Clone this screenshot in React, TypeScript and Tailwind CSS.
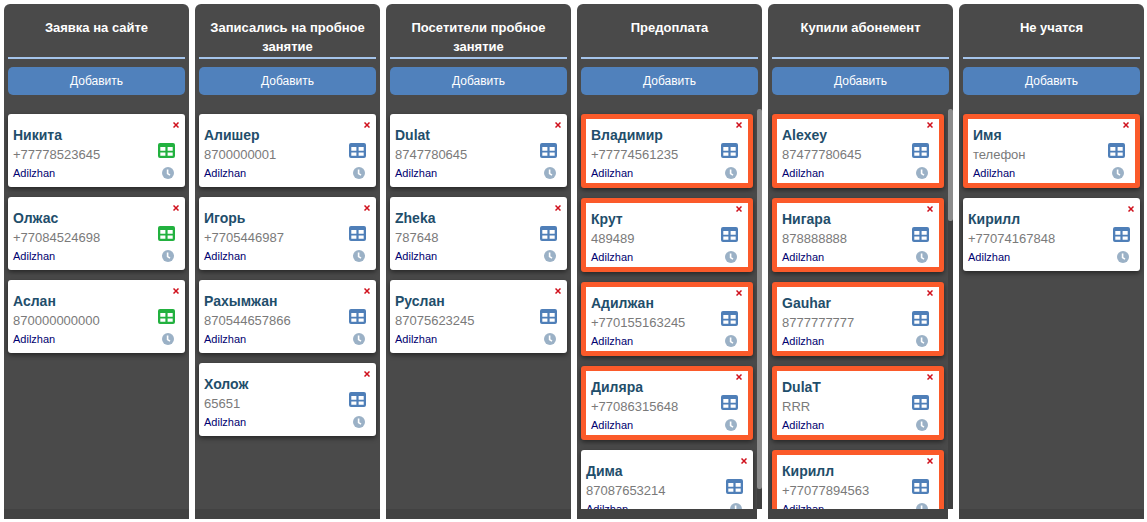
type Lead = { name: string; phone: string; hot?: boolean; green?: boolean };
type Stage = { title: string; leads: Lead[]; thumb?: string };

const stages: Stage[] = [
  {
    title: "Заявка на сайте",
    leads: [
      { name: "Никита", phone: "+77778523645", green: true },
      { name: "Олжас", phone: "+77084524698", green: true },
      { name: "Аслан", phone: "870000000000", green: true },
    ],
  },
  {
    title: "Записались на пробное занятие",
    leads: [
      { name: "Алишер", phone: "8700000001" },
      { name: "Игорь", phone: "+7705446987" },
      { name: "Рахымжан", phone: "870544657866" },
      { name: "Холож", phone: "65651" },
    ],
  },
  {
    title: "Посетители пробное занятие",
    leads: [
      { name: "Dulat", phone: "8747780645" },
      { name: "Zheka", phone: "787648" },
      { name: "Руслан", phone: "87075623245" },
    ],
  },
  {
    title: "Предоплата",
    thumb: "h-[95%]",
    leads: [
      { name: "Владимир", phone: "+77774561235", hot: true },
      { name: "Крут", phone: "489489", hot: true },
      { name: "Адилжан", phone: "+770155163245", hot: true },
      { name: "Диляра", phone: "+77086315648", hot: true },
      { name: "Дима", phone: "87087653214" },
    ],
  },
  {
    title: "Купили абонемент",
    thumb: "h-[28%]",
    leads: [
      { name: "Alexey", phone: "87477780645", hot: true },
      { name: "Нигара", phone: "878888888", hot: true },
      { name: "Gauhar", phone: "8777777777", hot: true },
      { name: "DulaT", phone: "RRR", hot: true },
      { name: "Кирилл", phone: "+77077894563", hot: true },
    ],
  },
  {
    title: "Не учатся",
    leads: [
      { name: "Имя", phone: "телефон", hot: true },
      { name: "Кирилл", phone: "+77074167848" },
    ],
  },
];

function TableIcon({ green }: { green?: boolean }) {
  return (
    <svg width="17" height="15" viewBox="0 0 17 15" className={green ? "text-[#22b13f]" : "text-[#4f7fb8]"} aria-hidden="true">
      <path
        fill="currentColor"
        fillRule="evenodd"
        d="M2 0H15Q17 0 17 2V13Q17 15 15 15H2Q0 15 0 13V2Q0 0 2 0ZM2.3 4V7.8H7.4V4ZM9.6 4V7.8H14.7V4ZM2.3 9.4V12.8H7.4V9.4ZM9.6 9.4V12.8H14.7V9.4Z"
      />
    </svg>
  );
}

function ClockIcon() {
  return (
    <svg width="12" height="12" viewBox="0 0 12 12" aria-hidden="true">
      <circle cx="6" cy="6" r="6" fill="#9bb1c6" />
      <path d="M5.6 2.4V6.6L8 8.2" fill="none" stroke="#fff" strokeWidth="1.6" />
    </svg>
  );
}

function CloseIcon() {
  return (
    <svg width="6" height="6" viewBox="0 0 6 6" aria-hidden="true">
      <path d="M0.5 0.5L5.5 5.5M5.5 0.5L0.5 5.5" stroke="#d0101c" strokeWidth="1.5" />
    </svg>
  );
}

function LeadCard({ lead }: { lead: Lead }) {
  return (
    <li
      className={
        lead.hot
          ? "flex h-[74px] shrink-0 justify-between rounded-[3px] border-5 border-[#fb5a2a] bg-white pl-[5px] shadow-[0_2px_5px_rgba(0,0,0,0.5)]"
          : "flex h-[73px] shrink-0 justify-between rounded-[3px] bg-white pt-[5px] pl-[5px] shadow-[0_2px_5px_rgba(0,0,0,0.5)]"
      }
    >
      <div className="min-w-0 pt-[6px]">
        <h3 className="text-[14px] leading-5 font-bold text-[#1f4e6b]">{lead.name}</h3>
        <p className="text-[13px] leading-5 text-[#7a7a7a]">{lead.phone}</p>
        <a href="#adilzhan" className="block text-[11px] leading-4 text-[#000070]">
          Adilzhan
        </a>
      </div>
      <div className="flex flex-col items-end pt-[3px]">
        <button type="button" aria-label="Удалить" className="mr-[6px]">
          <CloseIcon />
        </button>
        <button type="button" aria-label="Расписание" className="mt-[15px] mr-[10px]">
          <TableIcon green={lead.green} />
        </button>
        <button type="button" aria-label="История" className="mt-[9px] mr-[11px]">
          <ClockIcon />
        </button>
      </div>
    </li>
  );
}

function StageColumn({ stage }: { stage: Stage }) {
  return (
    <section className="flex min-w-0 flex-1 flex-col">
      <div className="flex min-h-0 flex-1 flex-col rounded-t-[6px] bg-[#4a4a4a]">
        <header className="shrink-0 px-1 pb-[14px]">
          <h2 className="h-[55px] border-b-2 border-[#a5c4ea] px-2 pt-[14px] text-center text-[13px] leading-[19px] font-bold text-white">
            {stage.title}
          </h2>
          <button type="button" className="mt-2 block h-7 w-full rounded-[5px] bg-[#5081bc] text-[12px] text-white">
            Добавить
          </button>
        </header>
        <div className="flex min-h-0 flex-1">
          <ul className="flex min-w-0 flex-1 flex-col gap-[10px] overflow-y-auto px-1 pt-[5px] [scrollbar-width:none]">
            {stage.leads.map((lead, i) => (
              <LeadCard key={i} lead={lead} />
            ))}
          </ul>
          {stage.thumb && (
            <div className="w-[5px] bg-[#404040]">
              <div className={`rounded-[2px] bg-[#8c8c8c] ${stage.thumb}`} />
            </div>
          )}
        </div>
      </div>
      <div className={stage.thumb ? "mr-[5px] h-[10px] bg-[#424242]" : "h-[10px] bg-[#424242]"} />
    </section>
  );
}

export default function App() {
  return (
    <main className="flex h-screen gap-[6px] bg-white pt-1 pr-[3px] pb-[3px] pl-1 font-['Liberation_Sans',Arial,sans-serif]">
      {stages.map((stage) => (
        <StageColumn key={stage.title} stage={stage} />
      ))}
    </main>
  );
}
